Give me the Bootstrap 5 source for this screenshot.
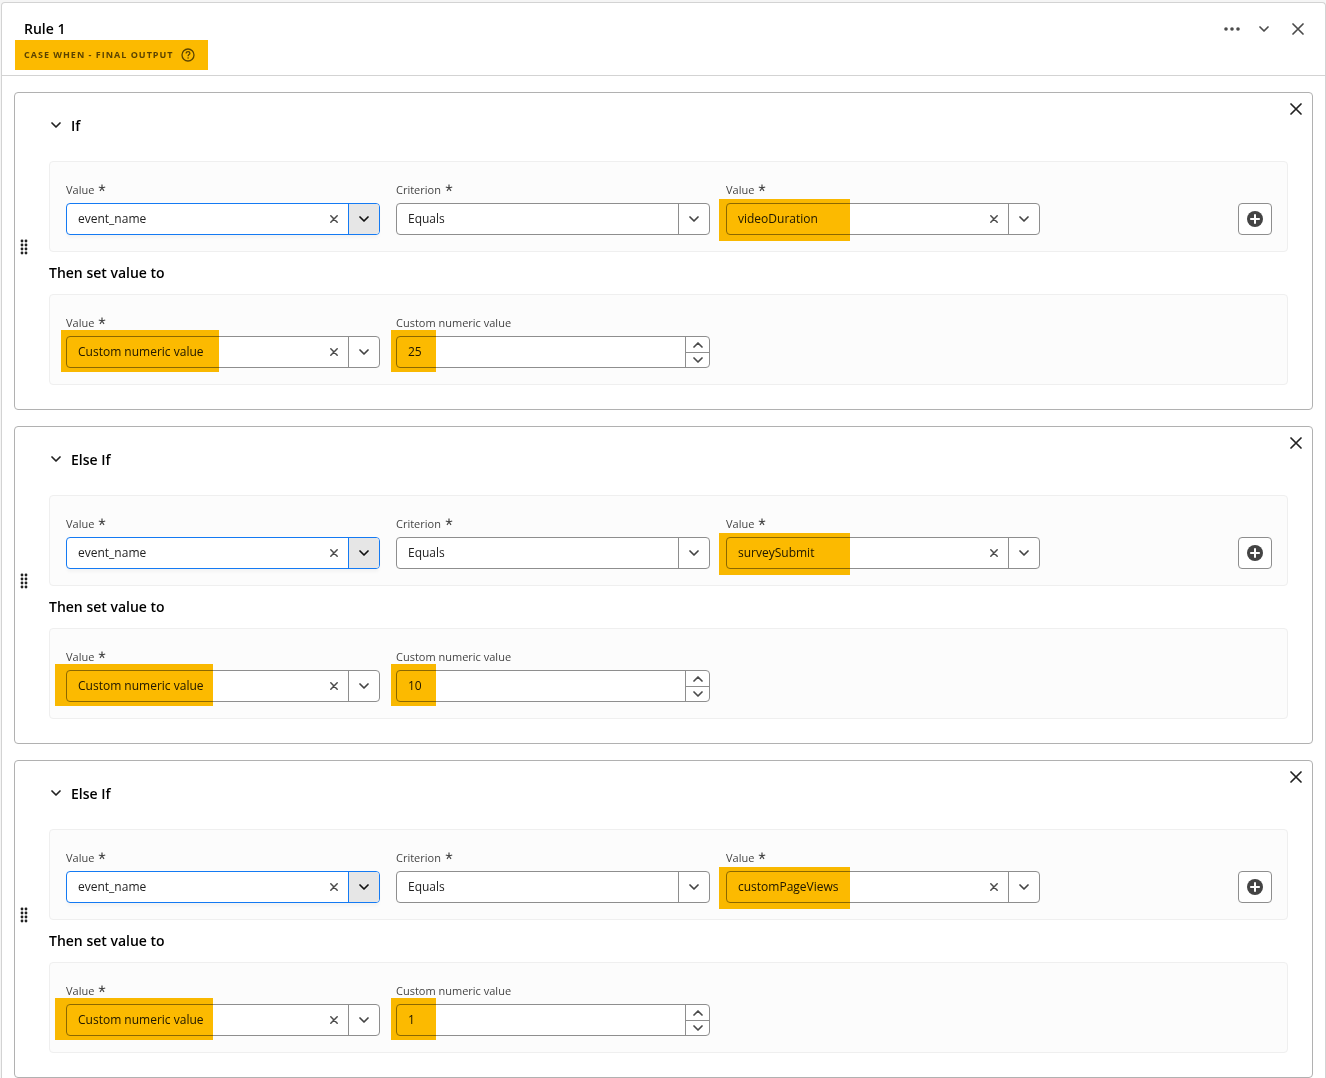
<!DOCTYPE html>
<html lang="en">
<head>
<meta charset="utf-8">
<meta name="viewport" content="width=device-width, initial-scale=1">
<title>Rule 1</title>
<link href="https://cdn.jsdelivr.net/npm/bootstrap@5.3.0/dist/css/bootstrap.min.css" rel="stylesheet">
<style>
body{background:#f5f5f5;font-family:"Open Sans","Noto Sans",sans-serif;font-size:12px;line-height:18px;color:#222}
svg{display:block;fill:none;stroke:currentColor}
.rule-panel{margin:2px 0 0 1px;border:1px solid #d3d3d3;border-bottom:0;border-radius:4px 4px 0 0;background:#fff}
.rule-head{height:73px;border-bottom:1px solid #d3d3d3;padding:16px 15px 0 22px}
.rule-title,.clause-title{font-size:14px;line-height:20px;font-weight:600;color:#000;margin:0}
.rule-sub{font-size:9px;line-height:14px;font-weight:700;letter-spacing:1px;color:#5c5c5c;margin-top:9px}
.rule-sub svg{margin-left:7px}
.plain-btn{border:0;background:none;padding:0;display:flex;align-items:center;justify-content:center;color:#4b4b4b;width:24px;height:20px}
.remove-rule{margin-left:2px}
.clauses{padding:16px 12px 0}
.clause{border:1px solid #b1b1b1;border-radius:4px;padding:0 24px 24px 0;position:relative}
.grip{width:34px;padding:16px 12px 0 5px;color:#222}
.clause-close{position:absolute;top:6px;right:4px;color:#222}
.clause-head{height:68px;padding-top:23px}
.clause-head .plain-btn{width:14px;height:18px;color:#222;margin-right:8px}
.then-title{height:42px;padding-top:11px}
.fields{background:#fcfcfc;border:1px solid #efefef;border-radius:4px;padding:16px 15px 16px 16px}
.field-box{flex:0 1 314px;min-width:0}
.field-label{height:25px;padding-top:4px;font-size:11px;line-height:16px;color:#444}
.field-label svg{margin:2px 0 0 4px}
.control{height:32px;border:1px solid #8e8e8e;border-radius:4px;background:#fff}
.control input,.control select{border:0;background:none;outline:0;flex:1 1 0;min-width:0;padding:0 0 0 11px;color:#222;appearance:none;-moz-appearance:textfield}
.control input::-webkit-inner-spin-button{appearance:none;margin:0}
.control .plain-btn{height:100%;width:28px}
.control .drop-btn{width:31px;border-left:1px solid #8e8e8e;color:#444;display:flex;align-items:center;justify-content:center}
.control.is-focus{border-color:#147af3;box-shadow:0 4px 3px -1px #f4f4f4}
.control.is-focus .drop-btn{border-color:#147af3;background:#e6e6e6;color:#111;border-radius:0 3px 3px 0}
.control .stepper{width:24px;border-left:1px solid #8e8e8e}
.control .stepper .plain-btn{width:100%;height:15px}
.control .stepper .plain-btn+.plain-btn{border-top:1px solid #8e8e8e}
.add-btn{width:34px;height:32px;border:1px solid #8e8e8e;border-radius:4px;background:#fff;padding:0;color:#444}
.marker{position:absolute;top:-6px;left:-5px;width:158px;height:42px;background:#fcba00;mix-blend-mode:multiply;pointer-events:none}
.marker-value{width:131px;top:-4px;left:-7px}
.marker-wide{left:-11px}
.marker-number{width:45px}
.marker-sub{width:193px;height:30px;top:-8px;left:-9px}
</style>
</head>
<body>
<svg width="0" height="0" class="position-absolute" aria-hidden="true">
<symbol id="chev" viewBox="0 0 10 6"><path d="M1 1l4 4 4-4" stroke-width="1.7" stroke-linecap="round" stroke-linejoin="round"/></symbol>
<symbol id="chev-up" viewBox="0 0 10 6"><path d="M1 5l4-4 4 4" stroke-width="1.7" stroke-linecap="round" stroke-linejoin="round"/></symbol>
<symbol id="cross" viewBox="0 0 12 12"><path d="M1 1l10 10M11 1L1 11" stroke-width="1.7" stroke-linecap="round"/></symbol>
<symbol id="clear" viewBox="0 0 8 8"><path d="M.8.8l6.4 6.4M7.2.8L.8 7.2" stroke-width="1.5" stroke-linecap="round"/></symbol>
<symbol id="star" viewBox="0 0 8 8"><path d="M4 4V.6M4 4L.8 3M4 4L7.2 3M4 4L2 6.8M4 4l2 2.8" stroke-width="1.2"/></symbol>
<symbol id="dots" viewBox="0 0 8 16"><g fill="currentColor" stroke="none"><circle cx="2" cy="2" r="1.4"/><circle cx="6" cy="2" r="1.4"/><circle cx="2" cy="6" r="1.4"/><circle cx="6" cy="6" r="1.4"/><circle cx="2" cy="10" r="1.4"/><circle cx="6" cy="10" r="1.4"/><circle cx="2" cy="14" r="1.4"/><circle cx="6" cy="14" r="1.4"/></g></symbol>
<symbol id="plus" viewBox="0 0 16 16"><circle cx="8" cy="8" r="8" fill="currentColor" stroke="none"/><path d="M8 3.2v9.6M3.2 8h9.6" stroke="#fff" stroke-width="2"/></symbol>
</svg>

<main class="rule-panel">
<header class="rule-head d-flex justify-content-between align-items-start">
  <div>
    <h1 class="rule-title">Rule 1</h1>
    <div class="rule-sub position-relative d-flex align-items-center"><span>CASE WHEN - FINAL OUTPUT</span>
      <svg width="14" height="14" viewBox="0 0 14 14"><circle cx="7" cy="7" r="6" stroke-width="1.3"/><path d="M5.2 5.4c0-1.2.8-1.8 1.9-1.8s1.8.7 1.8 1.6c0 1.4-1.8 1.4-1.8 3" stroke-width="1.3"/><circle cx="7.1" cy="10" r=".8" fill="currentColor" stroke="none"/></svg>
      <span class="marker marker-sub"></span></div>
  </div>
  <div class="d-flex gap-2">
    <button class="plain-btn" type="button" aria-label="More"><svg width="16" height="4" viewBox="0 0 16 4"><g fill="currentColor" stroke="none"><circle cx="2" cy="2" r="1.8"/><circle cx="8" cy="2" r="1.8"/><circle cx="14" cy="2" r="1.8"/></g></svg></button>
    <button class="plain-btn" type="button" aria-label="Collapse rule"><svg width="10" height="6"><use href="#chev"/></svg></button>
    <button class="plain-btn remove-rule" type="button" aria-label="Remove rule"><svg width="12" height="12"><use href="#cross"/></svg></button>
  </div>
</header>

<div class="clauses d-flex flex-column gap-3">

<section class="clause d-flex">
  <div class="grip d-flex align-items-center"><svg width="8" height="16"><use href="#dots"/></svg></div>
  <button class="plain-btn clause-close" type="button" aria-label="Remove condition"><svg width="12" height="12"><use href="#cross"/></svg></button>
  <div class="flex-grow-1">
    <div class="clause-head d-flex align-items-start"><button class="plain-btn" type="button" aria-label="Collapse"><svg width="10" height="6"><use href="#chev"/></svg></button><h2 class="clause-title">If</h2></div>
    <div class="fields d-flex align-items-end gap-3">
      <div class="field-box"><label class="field-label d-flex" for="a1">Value<svg width="8" height="8"><use href="#star"/></svg></label>
        <div class="control is-focus d-flex"><input id="a1" type="text" value="event_name"><button class="plain-btn" type="button" aria-label="Clear"><svg width="8" height="8"><use href="#clear"/></svg></button><button class="plain-btn drop-btn" type="button" aria-label="Open list"><svg width="10" height="6"><use href="#chev"/></svg></button></div></div>
      <div class="field-box"><label class="field-label d-flex" for="a2">Criterion<svg width="8" height="8"><use href="#star"/></svg></label>
        <div class="control d-flex"><select id="a2"><option>Equals</option></select><span class="drop-btn"><svg width="10" height="6"><use href="#chev"/></svg></span></div></div>
      <div class="field-box"><label class="field-label d-flex" for="a3">Value<svg width="8" height="8"><use href="#star"/></svg></label>
        <div class="position-relative"><div class="control d-flex"><input id="a3" type="text" value="videoDuration"><button class="plain-btn" type="button" aria-label="Clear"><svg width="8" height="8"><use href="#clear"/></svg></button><button class="plain-btn drop-btn" type="button" aria-label="Open list"><svg width="10" height="6"><use href="#chev"/></svg></button></div><span class="marker marker-value"></span></div></div>
      <button class="add-btn ms-auto d-flex align-items-center justify-content-center" type="button" aria-label="Add"><svg width="16" height="16"><use href="#plus"/></svg></button>
    </div>
    <h3 class="clause-title then-title">Then set value to</h3>
    <div class="fields d-flex align-items-end gap-3">
      <div class="field-box"><label class="field-label d-flex" for="a4">Value<svg width="8" height="8"><use href="#star"/></svg></label>
        <div class="position-relative"><div class="control d-flex"><input id="a4" type="text" value="Custom numeric value"><button class="plain-btn" type="button" aria-label="Clear"><svg width="8" height="8"><use href="#clear"/></svg></button><button class="plain-btn drop-btn" type="button" aria-label="Open list"><svg width="10" height="6"><use href="#chev"/></svg></button></div><span class="marker"></span></div></div>
      <div class="field-box"><label class="field-label d-flex" for="a5">Custom numeric value</label>
        <div class="position-relative"><div class="control d-flex"><input id="a5" type="number" value="25"><div class="stepper"><button class="plain-btn" type="button" aria-label="Increase"><svg width="10" height="6"><use href="#chev-up"/></svg></button><button class="plain-btn" type="button" aria-label="Decrease"><svg width="10" height="6"><use href="#chev"/></svg></button></div></div><span class="marker marker-number"></span></div></div>
    </div>
  </div>
</section>

<section class="clause d-flex">
  <div class="grip d-flex align-items-center"><svg width="8" height="16"><use href="#dots"/></svg></div>
  <button class="plain-btn clause-close" type="button" aria-label="Remove condition"><svg width="12" height="12"><use href="#cross"/></svg></button>
  <div class="flex-grow-1">
    <div class="clause-head d-flex align-items-start"><button class="plain-btn" type="button" aria-label="Collapse"><svg width="10" height="6"><use href="#chev"/></svg></button><h2 class="clause-title">Else If</h2></div>
    <div class="fields d-flex align-items-end gap-3">
      <div class="field-box"><label class="field-label d-flex" for="b1">Value<svg width="8" height="8"><use href="#star"/></svg></label>
        <div class="control is-focus d-flex"><input id="b1" type="text" value="event_name"><button class="plain-btn" type="button" aria-label="Clear"><svg width="8" height="8"><use href="#clear"/></svg></button><button class="plain-btn drop-btn" type="button" aria-label="Open list"><svg width="10" height="6"><use href="#chev"/></svg></button></div></div>
      <div class="field-box"><label class="field-label d-flex" for="b2">Criterion<svg width="8" height="8"><use href="#star"/></svg></label>
        <div class="control d-flex"><select id="b2"><option>Equals</option></select><span class="drop-btn"><svg width="10" height="6"><use href="#chev"/></svg></span></div></div>
      <div class="field-box"><label class="field-label d-flex" for="b3">Value<svg width="8" height="8"><use href="#star"/></svg></label>
        <div class="position-relative"><div class="control d-flex"><input id="b3" type="text" value="surveySubmit"><button class="plain-btn" type="button" aria-label="Clear"><svg width="8" height="8"><use href="#clear"/></svg></button><button class="plain-btn drop-btn" type="button" aria-label="Open list"><svg width="10" height="6"><use href="#chev"/></svg></button></div><span class="marker marker-value"></span></div></div>
      <button class="add-btn ms-auto d-flex align-items-center justify-content-center" type="button" aria-label="Add"><svg width="16" height="16"><use href="#plus"/></svg></button>
    </div>
    <h3 class="clause-title then-title">Then set value to</h3>
    <div class="fields d-flex align-items-end gap-3">
      <div class="field-box"><label class="field-label d-flex" for="b4">Value<svg width="8" height="8"><use href="#star"/></svg></label>
        <div class="position-relative"><div class="control d-flex"><input id="b4" type="text" value="Custom numeric value"><button class="plain-btn" type="button" aria-label="Clear"><svg width="8" height="8"><use href="#clear"/></svg></button><button class="plain-btn drop-btn" type="button" aria-label="Open list"><svg width="10" height="6"><use href="#chev"/></svg></button></div><span class="marker marker-wide"></span></div></div>
      <div class="field-box"><label class="field-label d-flex" for="b5">Custom numeric value</label>
        <div class="position-relative"><div class="control d-flex"><input id="b5" type="number" value="10"><div class="stepper"><button class="plain-btn" type="button" aria-label="Increase"><svg width="10" height="6"><use href="#chev-up"/></svg></button><button class="plain-btn" type="button" aria-label="Decrease"><svg width="10" height="6"><use href="#chev"/></svg></button></div></div><span class="marker marker-number"></span></div></div>
    </div>
  </div>
</section>

<section class="clause d-flex">
  <div class="grip d-flex align-items-center"><svg width="8" height="16"><use href="#dots"/></svg></div>
  <button class="plain-btn clause-close" type="button" aria-label="Remove condition"><svg width="12" height="12"><use href="#cross"/></svg></button>
  <div class="flex-grow-1">
    <div class="clause-head d-flex align-items-start"><button class="plain-btn" type="button" aria-label="Collapse"><svg width="10" height="6"><use href="#chev"/></svg></button><h2 class="clause-title">Else If</h2></div>
    <div class="fields d-flex align-items-end gap-3">
      <div class="field-box"><label class="field-label d-flex" for="c1">Value<svg width="8" height="8"><use href="#star"/></svg></label>
        <div class="control is-focus d-flex"><input id="c1" type="text" value="event_name"><button class="plain-btn" type="button" aria-label="Clear"><svg width="8" height="8"><use href="#clear"/></svg></button><button class="plain-btn drop-btn" type="button" aria-label="Open list"><svg width="10" height="6"><use href="#chev"/></svg></button></div></div>
      <div class="field-box"><label class="field-label d-flex" for="c2">Criterion<svg width="8" height="8"><use href="#star"/></svg></label>
        <div class="control d-flex"><select id="c2"><option>Equals</option></select><span class="drop-btn"><svg width="10" height="6"><use href="#chev"/></svg></span></div></div>
      <div class="field-box"><label class="field-label d-flex" for="c3">Value<svg width="8" height="8"><use href="#star"/></svg></label>
        <div class="position-relative"><div class="control d-flex"><input id="c3" type="text" value="customPageViews"><button class="plain-btn" type="button" aria-label="Clear"><svg width="8" height="8"><use href="#clear"/></svg></button><button class="plain-btn drop-btn" type="button" aria-label="Open list"><svg width="10" height="6"><use href="#chev"/></svg></button></div><span class="marker marker-value"></span></div></div>
      <button class="add-btn ms-auto d-flex align-items-center justify-content-center" type="button" aria-label="Add"><svg width="16" height="16"><use href="#plus"/></svg></button>
    </div>
    <h3 class="clause-title then-title">Then set value to</h3>
    <div class="fields d-flex align-items-end gap-3">
      <div class="field-box"><label class="field-label d-flex" for="c4">Value<svg width="8" height="8"><use href="#star"/></svg></label>
        <div class="position-relative"><div class="control d-flex"><input id="c4" type="text" value="Custom numeric value"><button class="plain-btn" type="button" aria-label="Clear"><svg width="8" height="8"><use href="#clear"/></svg></button><button class="plain-btn drop-btn" type="button" aria-label="Open list"><svg width="10" height="6"><use href="#chev"/></svg></button></div><span class="marker marker-wide"></span></div></div>
      <div class="field-box"><label class="field-label d-flex" for="c5">Custom numeric value</label>
        <div class="position-relative"><div class="control d-flex"><input id="c5" type="number" value="1"><div class="stepper"><button class="plain-btn" type="button" aria-label="Increase"><svg width="10" height="6"><use href="#chev-up"/></svg></button><button class="plain-btn" type="button" aria-label="Decrease"><svg width="10" height="6"><use href="#chev"/></svg></button></div></div><span class="marker marker-number"></span></div></div>
    </div>
  </div>
</section>

</div>
</main>
<script src="https://cdn.jsdelivr.net/npm/bootstrap@5.3.0/dist/js/bootstrap.bundle.min.js"></script>
</body>
</html>
